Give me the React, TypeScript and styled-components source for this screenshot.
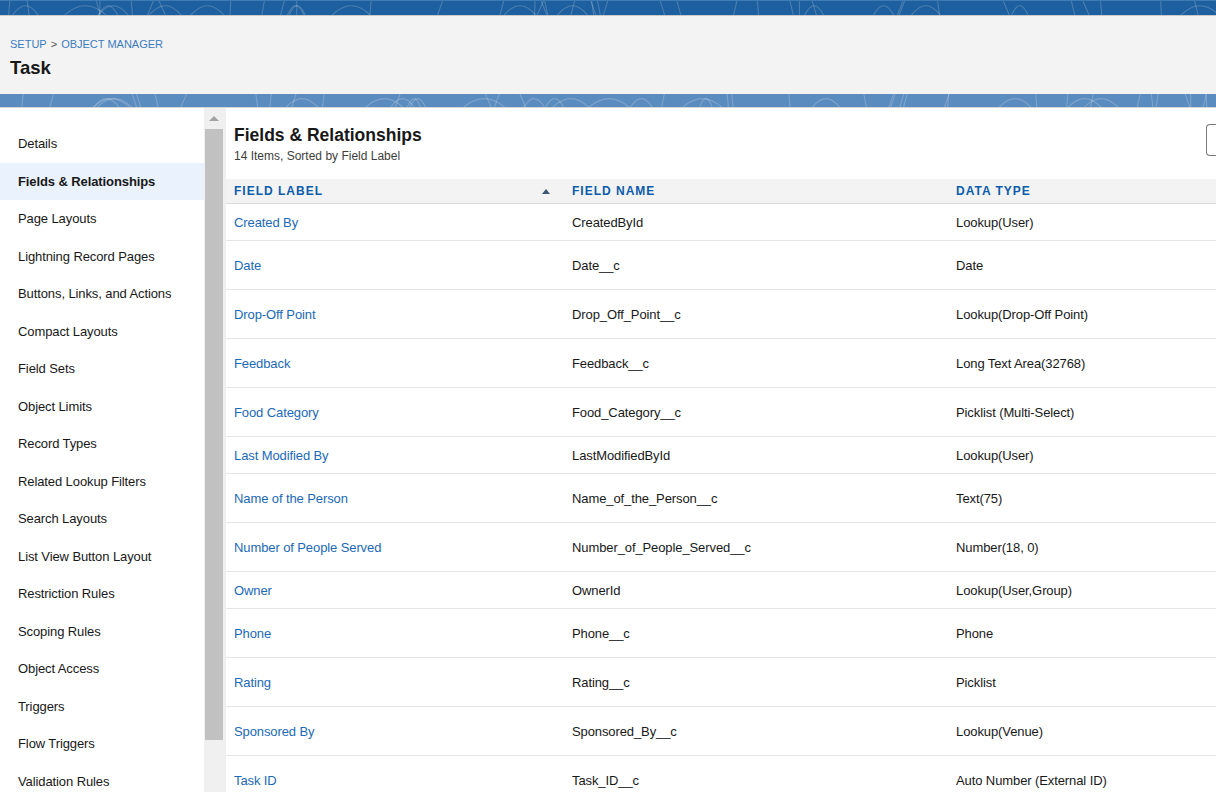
import React from "react";
import styled, { createGlobalStyle } from "styled-components";

const GlobalStyle = createGlobalStyle`
  html, body { margin: 0; padding: 0; }
  body {
    font-family: "Liberation Sans", Arial, sans-serif;
    color: #181818;
    background: #ffffff;
  }
  * { box-sizing: border-box; }
`;

const Page = styled.div`
  width: 1216px;
  height: 792px;
  overflow: hidden;
  display: flex;
  flex-direction: column;
`;

const Band = styled.div<{ $tone: "dark" | "light"; $h: number }>`
  position: relative;
  height: ${(p) => p.$h}px;
  flex: none;
  overflow: hidden;
  background: ${(p) => (p.$tone === "dark" ? "#1d5f9f" : "#5b8cc0")};
  border-top: ${(p) => (p.$tone === "dark" ? "1px solid #3f7cb5" : "none")};
  border-bottom: 1px solid ${(p) => (p.$tone === "dark" ? "#c9c9c9" : "#d4d4d4")};
  svg { display: block; width: 100%; height: 100%; }
`;

const Header = styled.header`
  flex: none;
  height: 78px;
  background: #f3f3f3;
  padding: 20px 10px 0;
  display: flex;
  flex-direction: column;
  gap: 4px;
`;

const Crumbs = styled.div`
  font-size: 11px;
  line-height: 16px;
  color: #3b7bbf;
  display: flex;
  gap: 4px;
  span.sep { color: #555; }
`;

const ObjTitle = styled.h1`
  margin: 0;
  font-size: 18.5px;
  line-height: 24px;
  font-weight: 700;
  color: #181818;
`;

const Body = styled.div`
  flex: 1;
  display: flex;
  min-height: 0;
`;

const Sidebar = styled.nav`
  width: 204px;
  flex: none;
  padding-top: 17px;
  display: flex;
  flex-direction: column;
`;

const NavItem = styled.div<{ $active?: boolean }>`
  height: 37.5px;
  flex: none;
  display: flex;
  align-items: center;
  padding-left: 18px;
  font-size: 13px;
  letter-spacing: -0.1px;
  color: #181818;
  font-weight: ${(p) => (p.$active ? 700 : 400)};
  background: ${(p) => (p.$active ? "#eaf3fd" : "transparent")};
`;

const ScrollTrack = styled.div`
  width: 22px;
  flex: none;
  background: #f0f0f0;
  display: flex;
  flex-direction: column;
  align-items: center;
  padding: 8px 3px 0 1px;
  gap: 8px;
`;

const ScrollArrow = styled.div`
  width: 0;
  height: 0;
  border-left: 5px solid transparent;
  border-right: 5px solid transparent;
  border-bottom: 5px solid #a3a3a3;
`;

const ScrollThumb = styled.div`
  width: 100%;
  height: 611px;
  background: #c1c1c1;
`;

const Main = styled.main`
  flex: 1;
  display: flex;
  flex-direction: column;
  min-width: 0;
`;

const TitleBar = styled.div`
  height: 71px;
  flex: none;
  display: flex;
  justify-content: space-between;
  align-items: flex-start;
  padding: 16px 0 0 8px;
`;

const TitleBlock = styled.div`
  display: flex;
  flex-direction: column;
  gap: 2px;
`;

const SectionTitle = styled.h2`
  margin: 0;
  font-size: 17.5px;
  line-height: 22px;
  font-weight: 700;
  color: #181818;
`;

const SubTitle = styled.div`
  font-size: 12px;
  line-height: 16px;
  color: #3e3e3c;
`;

const EdgeButton = styled.div`
  width: 10px;
  height: 32px;
  margin-top: 0;
  border: 1px solid #7a7a7a;
  border-right: none;
  border-radius: 4px 0 0 4px;
`;

const Cols = "338px 384px 1fr";

const HeadRow = styled.div`
  display: grid;
  flex: none;
  grid-template-columns: ${Cols};
  height: 25px;
  background: #f3f3f3;
  border-bottom: 1px solid #dddbda;
  align-items: center;
`;

const HeadCell = styled.div`
  padding: 0 8px;
  font-size: 12px;
  font-weight: 700;
  letter-spacing: 1px;
  color: #0b5cab;
  display: flex;
  align-items: center;
  justify-content: space-between;
`;

const SortIcon = styled.span`
  width: 0;
  height: 0;
  margin-right: 6px;
  border-left: 4.5px solid transparent;
  border-right: 4.5px solid transparent;
  border-bottom: 5px solid #3e5874;
`;

const Row = styled.div<{ $tall?: boolean }>`
  display: grid;
  grid-template-columns: ${Cols};
  height: ${(p) => (p.$tall ? 49 : 37)}px;
  align-items: center;
  border-bottom: 1px solid #e5e5e5;
  flex: none;
`;

const Cell = styled.div<{ $link?: boolean }>`
  padding: 0 8px;
  font-size: 13px;
  letter-spacing: -0.1px;
  color: ${(p) => (p.$link ? "#1b69b7" : "#181818")};
  white-space: nowrap;
`;

const navItems = [
  "Details",
  "Fields & Relationships",
  "Page Layouts",
  "Lightning Record Pages",
  "Buttons, Links, and Actions",
  "Compact Layouts",
  "Field Sets",
  "Object Limits",
  "Record Types",
  "Related Lookup Filters",
  "Search Layouts",
  "List View Button Layout",
  "Restriction Rules",
  "Scoping Rules",
  "Object Access",
  "Triggers",
  "Flow Triggers",
  "Validation Rules",
];

const rows: [string, string, string, boolean][] = [
  ["Created By", "CreatedById", "Lookup(User)", false],
  ["Date", "Date__c", "Date", true],
  ["Drop-Off Point", "Drop_Off_Point__c", "Lookup(Drop-Off Point)", true],
  ["Feedback", "Feedback__c", "Long Text Area(32768)", true],
  ["Food Category", "Food_Category__c", "Picklist (Multi-Select)", true],
  ["Last Modified By", "LastModifiedById", "Lookup(User)", false],
  ["Name of the Person", "Name_of_the_Person__c", "Text(75)", true],
  ["Number of People Served", "Number_of_People_Served__c", "Number(18, 0)", true],
  ["Owner", "OwnerId", "Lookup(User,Group)", false],
  ["Phone", "Phone__c", "Phone", true],
  ["Rating", "Rating__c", "Picklist", true],
  ["Sponsored By", "Sponsored_By__c", "Lookup(Venue)", true],
  ["Task ID", "Task_ID__c", "Auto Number (External ID)", true],
];

function Pattern({ seed, h }: { seed: number; h: number }) {
  const paths: string[] = [];
  let s = seed;
  const rnd = () => {
    s = (s * 9301 + 49297) % 233280;
    return s / 233280;
  };
  for (let i = 0; i < 55; i++) {
    const x = rnd() * 1216;
    const kind = rnd();
    if (kind < 0.6) {
      const dx = (rnd() - 0.5) * 16;
      paths.push(`M${x.toFixed(1)} ${h + 2} L${(x + dx).toFixed(1)} -2`);
    } else {
      const r = 14 + rnd() * 36;
      paths.push(
        `M${x.toFixed(1)} ${h + 4} Q${(x + r / 2).toFixed(1)} ${(-h * 0.6).toFixed(1)} ${(x + r).toFixed(1)} ${h + 4}`
      );
    }
  }
  return (
    <svg viewBox={`0 0 1216 ${h}`} preserveAspectRatio="none">
      {paths.map((d, i) => (
        <path key={i} d={d} fill="none" stroke="rgba(255,255,255,0.2)" strokeWidth={1.1} />
      ))}
    </svg>
  );
}

export default function App() {
  return (
    <Page>
      <GlobalStyle />
      <Band $tone="dark" $h={16}>
        <Pattern seed={7} h={15} />
      </Band>
      <Header>
        <Crumbs>
          <span>SETUP</span>
          <span className="sep">&gt;</span>
          <span>OBJECT MANAGER</span>
        </Crumbs>
        <ObjTitle>Task</ObjTitle>
      </Header>
      <Band $tone="light" $h={14}>
        <Pattern seed={31} h={13} />
      </Band>
      <Body>
        <Sidebar>
          {navItems.map((n) => (
            <NavItem key={n} $active={n === "Fields & Relationships"}>
              {n}
            </NavItem>
          ))}
        </Sidebar>
        <ScrollTrack>
          <ScrollArrow />
          <ScrollThumb />
        </ScrollTrack>
        <Main>
          <TitleBar>
            <TitleBlock>
              <SectionTitle>Fields &amp; Relationships</SectionTitle>
              <SubTitle>14 Items, Sorted by Field Label</SubTitle>
            </TitleBlock>
            <EdgeButton />
          </TitleBar>
          <HeadRow>
            <HeadCell>
              FIELD LABEL
              <SortIcon />
            </HeadCell>
            <HeadCell>FIELD NAME</HeadCell>
            <HeadCell>DATA TYPE</HeadCell>
          </HeadRow>
          {rows.map(([label, name, type, tall]) => (
            <Row key={name} $tall={tall}>
              <Cell $link>{label}</Cell>
              <Cell>{name}</Cell>
              <Cell>{type}</Cell>
            </Row>
          ))}
        </Main>
      </Body>
    </Page>
  );
}
